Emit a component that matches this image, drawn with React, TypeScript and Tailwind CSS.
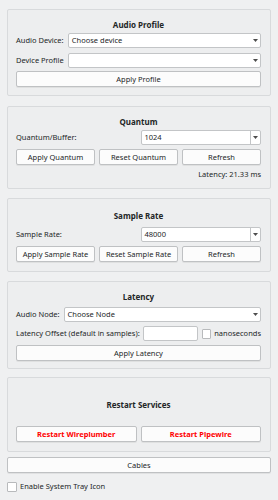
import React from 'react';

const font = { fontFamily: '"Noto Sans", "Open Sans", sans-serif' };

function Arrow() {
  return (
    <svg width="5" height="3" viewBox="0 0 5 3" className="shrink-0">
      <path d="M0 0 L5 0 L2.5 3 Z" fill="#4d4d4d" />
    </svg>
  );
}

function Combo({ value, editable }: { value?: string; editable?: boolean }) {
  return (
    <div className="flex h-[15px] min-w-0 flex-1 items-center rounded-[2px] border border-[#c3c5c7] bg-white">
      <span className="flex-1 whitespace-nowrap pl-[3px] text-[7.5px] leading-[13px] text-[#232627]">{value}</span>
      {editable ? (
        <span className="flex h-full w-[10px] items-center justify-center border-l border-[#c3c5c7]">
          <Arrow />
        </span>
      ) : (
        <span className="flex w-[10px] items-center justify-center">
          <Arrow />
        </span>
      )}
    </div>
  );
}

function Btn({ children, red }: { children: React.ReactNode; red?: boolean }) {
  return (
    <div
      className={`flex h-[16px] items-center justify-center rounded-[2px] border border-[#bfc1c3] bg-[#fcfcfc] text-[7.5px] leading-[13px] shadow-[0_1px_0_rgba(0,0,0,0.06)] ${
        red ? 'font-bold text-[#ff0000]' : 'text-[#232627]'
      }`}
    >
      {children}
    </div>
  );
}

function Title({ children }: { children: React.ReactNode }) {
  return <div className="h-[12px] text-center text-[8px] font-bold leading-[12px] text-[#232627]">{children}</div>;
}

function Label({ children }: { children: React.ReactNode }) {
  return <span className="whitespace-nowrap text-[7.5px] leading-[13px] text-[#232627]">{children}</span>;
}

function Group({ className, children }: { className: string; children: React.ReactNode }) {
  return (
    <div className={`rounded-[2px] border border-[#d8dadc] bg-[#edeeef] pl-[8px] pr-[9px] ${className}`}>{children}</div>
  );
}

export default function App() {
  return (
    <div className="h-[500px] w-[278px] overflow-hidden bg-[#eff0f1] px-[7px] pt-[9px]" style={font}>
      <Group className="h-[87px] pt-[9px]">
        <Title>Audio Profile</Title>
        <div className="mt-[2px] grid grid-cols-[auto_1fr] items-center gap-x-[4px] gap-y-[5px]">
          <Label>Audio Device:</Label>
          <Combo value="Choose device" />
          <Label>Device Profile</Label>
          <Combo />
        </div>
        <div className="mt-[3px]">
          <Btn>Apply Profile</Btn>
        </div>
      </Group>

      <Group className="mt-[10px] h-[83px] pt-[9px]">
        <Title>Quantum</Title>
        <div className="mt-[2px] grid grid-cols-2 items-center gap-x-[4px]">
          <Label>Quantum/Buffer:</Label>
          <Combo value="1024" editable />
        </div>
        <div className="mt-[4px] grid grid-cols-3 gap-x-[4px]">
          <Btn>Apply Quantum</Btn>
          <Btn>Reset Quantum</Btn>
          <Btn>Refresh</Btn>
        </div>
        <div className="mt-[3px] text-right text-[7.5px] leading-[12px] text-[#232627]">Latency: 21.33 ms</div>
      </Group>

      <Group className="mt-[9px] h-[74px] pt-[11px]">
        <Title>Sample Rate</Title>
        <div className="mt-[5px] grid grid-cols-2 items-center gap-x-[4px]">
          <Label>Sample Rate:</Label>
          <Combo value="48000" editable />
        </div>
        <div className="mt-[4px] grid grid-cols-3 gap-x-[4px]">
          <Btn>Apply Sample Rate</Btn>
          <Btn>Reset Sample Rate</Btn>
          <Btn>Refresh</Btn>
        </div>
      </Group>

      <Group className="mt-[9px] h-[88px] pt-[9px]">
        <Title>Latency</Title>
        <div className="mt-[4px] flex items-center gap-x-[4px]">
          <Label>Audio Node:</Label>
          <Combo value="Choose Node" />
        </div>
        <div className="mt-[4px] flex h-[15px] items-center">
          <Label>Latency Offset (default in samples):</Label>
          <div className="ml-[3px] h-[15px] w-[59px] rounded-[2px] border border-[#c3c5c7] bg-white" />
          <div className="ml-[4px] h-[10px] w-[10px] rounded-[1px] border border-[#b8babc] bg-white" />
          <span className="ml-[3px] text-[7.5px] leading-[13px] text-[#232627]">nanoseconds</span>
        </div>
        <div className="mt-[4px]">
          <Btn>Apply Latency</Btn>
        </div>
      </Group>

      <Group className="mt-[8px] h-[75px] pt-[21px]">
        <Title>Restart Services</Title>
        <div className="mt-[15px] grid grid-cols-2 gap-x-[4px]">
          <Btn red>Restart Wireplumber</Btn>
          <Btn red>Restart Pipewire</Btn>
        </div>
      </Group>

      <div className="mt-[5px]">
        <Btn>Cables</Btn>
      </div>

      <div className="mt-[7px] flex items-center">
        <div className="h-[10px] w-[10px] rounded-[1px] border border-[#b8babc] bg-white" />
        <span className="ml-[3px] text-[7.5px] leading-[13px] text-[#232627]">Enable System Tray Icon</span>
      </div>
    </div>
  );
}
